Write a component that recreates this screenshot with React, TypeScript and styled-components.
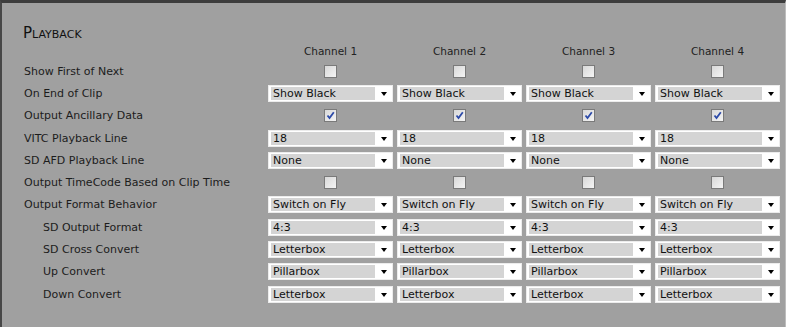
import React from "react";
import styled, { createGlobalStyle } from "styled-components";

const Global = createGlobalStyle`
  html, body { margin: 0; padding: 0; background: #a0a0a0; }
  body { font-family: "DejaVu Sans", Verdana, sans-serif; }
`;

const Panel = styled.div`
  width: 786px;
  height: 327px;
  box-sizing: border-box;
  background: #a0a0a0;
  border-top: 3px solid #3d3d3d;
  border-left: 2px solid #474747;
  border-right: 1px solid #bdbdbd;
  padding: 21px 0 0 21px;
  color: #1c1c1c;
  font-size: 11px;
`;

const Title = styled.div`
  font-size: 15px;
  line-height: 18px;
  font-variant: small-caps;
  color: #111;
  height: 19px;
`;

const Grid = styled.div`
  display: grid;
  grid-template-columns: 241px repeat(4, 125px);
  column-gap: 4px;
`;

const Header = styled.div`
  height: 17px;
  line-height: 16px;
  text-align: center;
  font-size: 10.5px;
  color: #222;
`;

const Label = styled.div<{ $indent?: boolean }>`
  height: 22.3px;
  display: flex;
  align-items: center;
  padding-left: ${(p) => (p.$indent ? "20px" : "1px")};
  white-space: nowrap;
`;

const Cell = styled.div`
  height: 22.3px;
  display: flex;
  align-items: center;
  justify-content: center;
`;

const SelectBox = styled.div`
  width: 125px;
  height: 17px;
  box-sizing: border-box;
  background: #fff;
  border: 1px solid #ececec;
  display: flex;
  align-items: center;
  padding: 1px 0 1px 2px;
`;

const SelectField = styled.div`
  width: 104px;
  height: 13px;
  background: #d4d4d4;
  line-height: 13px;
  padding-left: 2px;
  box-sizing: border-box;
  color: #111;
  white-space: nowrap;
  overflow: hidden;
`;

const Arrow = styled.div`
  flex: 1;
  display: flex;
  justify-content: center;
  align-items: center;
  &::after {
    content: "";
    width: 0;
    height: 0;
    border-left: 3.5px solid transparent;
    border-right: 3.5px solid transparent;
    border-top: 4px solid #000;
    margin-top: 1px;
  }
`;

const Box = styled.div`
  width: 13px;
  height: 13px;
  box-sizing: border-box;
  border: 1px solid #7a7a7a;
  background: linear-gradient(135deg, #d8d8d8 0%, #f4f4f4 100%);
  display: flex;
  align-items: center;
  justify-content: center;
`;

const Check = ({ on }: { on: boolean }) => (
  <Box>
    {on && (
      <svg width="9" height="9" viewBox="0 0 9 9">
        <path d="M1.5 4.5 L3.5 7 L7.8 1.2" stroke="#2c4aa8" strokeWidth="1.8" fill="none" />
      </svg>
    )}
  </Box>
);

const Select = ({ v }: { v: string }) => (
  <SelectBox>
    <SelectField>{v}</SelectField>
    <Arrow />
  </SelectBox>
);

type Row = { label: string; indent?: boolean; check?: boolean; value?: string };

const rows: Row[] = [
  { label: "Show First of Next", check: false },
  { label: "On End of Clip", value: "Show Black" },
  { label: "Output Ancillary Data", check: true },
  { label: "VITC Playback Line", value: "18" },
  { label: "SD AFD Playback Line", value: "None" },
  { label: "Output TimeCode Based on Clip Time", check: false },
  { label: "Output Format Behavior", value: "Switch on Fly" },
  { label: "SD Output Format", indent: true, value: "4:3" },
  { label: "SD Cross Convert", indent: true, value: "Letterbox" },
  { label: "Up Convert", indent: true, value: "Pillarbox" },
  { label: "Down Convert", indent: true, value: "Letterbox" },
];

const channels = [1, 2, 3, 4];

export default function App() {
  return (
    <>
      <Global />
      <Panel>
        <Title>Playback</Title>
        <Grid>
          <Header />
          {channels.map((c) => (
            <Header key={c}>Channel {c}</Header>
          ))}
          {rows.map((r) => (
            <React.Fragment key={r.label}>
              <Label $indent={r.indent}>{r.label}</Label>
              {channels.map((c) => (
                <Cell key={c}>
                  {r.value !== undefined ? <Select v={r.value} /> : <Check on={!!r.check} />}
                </Cell>
              ))}
            </React.Fragment>
          ))}
        </Grid>
      </Panel>
    </>
  );
}
